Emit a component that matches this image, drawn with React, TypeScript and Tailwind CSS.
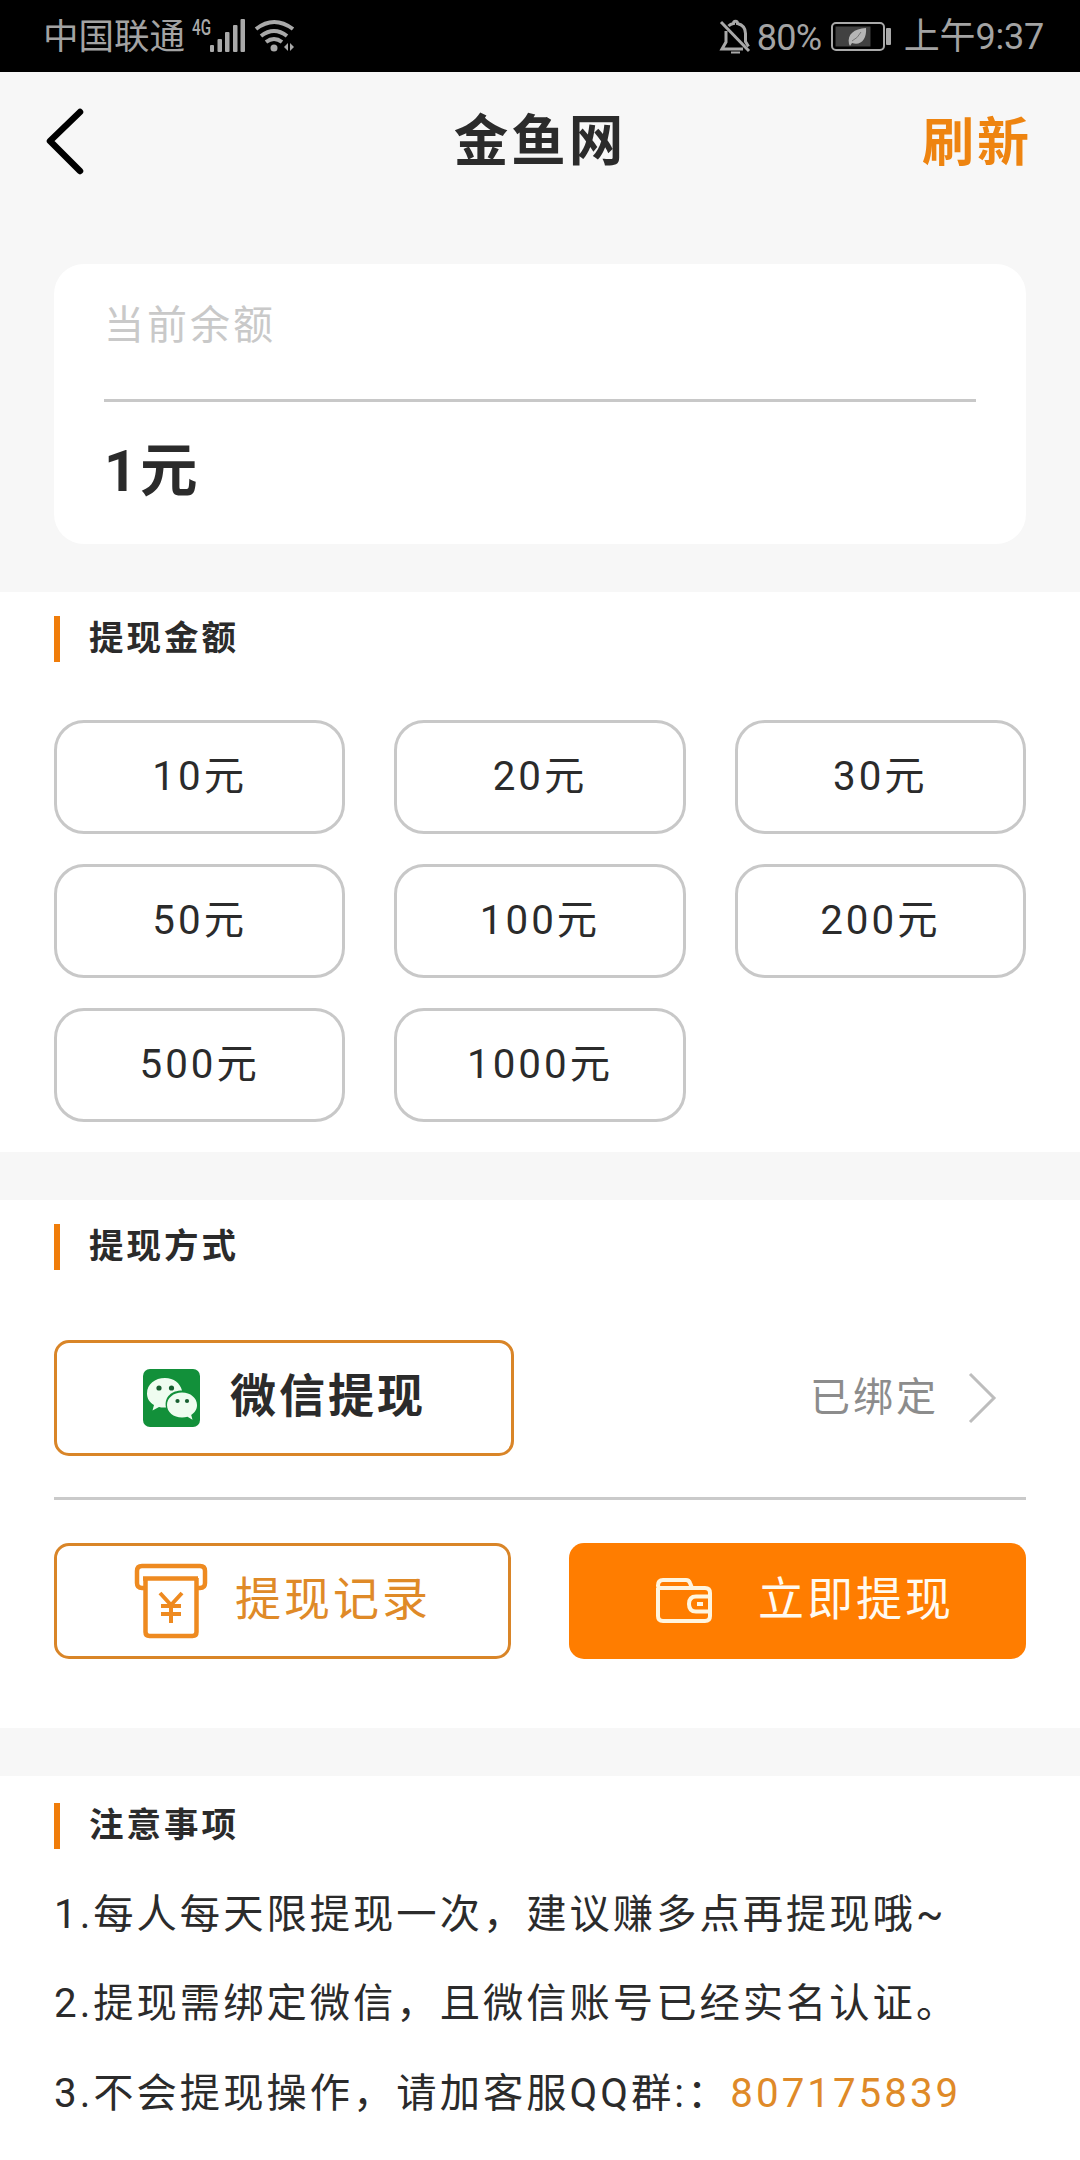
import React from "react";

const amounts = ["10元", "20元", "30元", "50元", "100元", "200元", "500元", "1000元"];

function StatusBar() {
  return (
    <div className="flex h-[72px] items-center bg-black text-[36px] leading-[72px] text-[#a3a3a3]">
      <span className="mt-[2px] ml-[43px] w-[144px] text-[35.5px]">中国联通</span>
      <svg className="ml-[4px]" width="106" height="72" viewBox="0 0 106 72" fill="none">
        <text x="1" y="35" fontSize="22" fontWeight="500" fontFamily="Roboto, sans-serif" fill="#a9a9a9" textLength="19" lengthAdjust="spacingAndGlyphs">4G</text>
        <g fill="#a9a9a9">
          <rect x="19" y="45" width="4" height="7" rx="1" />
          <rect x="26.500" y="39" width="4.500" height="13" rx="1" />
          <rect x="34" y="32" width="4.500" height="20" rx="1" />
          <rect x="42" y="25" width="4.500" height="27" rx="1" />
          <rect x="49.500" y="19" width="4.500" height="33" rx="1" />
          <circle cx="83" cy="48" r="3.500" />
          <path d="M97 43v8l-4-4zM99 43v8l4-4z" />
        </g>
        <g stroke="#a9a9a9" strokeWidth="4">
          <path d="M65 29q18-14 37 0" />
          <path d="M70 36q13-10 26 0" />
          <path d="M75 42q8-6 16 0" />
        </g>
      </svg>
      <svg className="ml-auto" width="34" height="72" viewBox="0 0 34 72" fill="none" stroke="#a9a9a9" strokeWidth="3">
        <path d="M3 22l28 29" />
        <path d="M8 31v11l-4 7h21M10.500 26q2-2 5-2.500c0-3 4-3 4 0q8 2 8 10v8l3 5" />
        <path d="M13 52.500h9" strokeWidth="2" />
      </svg>
      <span className="mt-[3px] ml-[5px] w-[73px] tracking-[-0.8px]">80%</span>
      <svg width="66" height="72" viewBox="0 0 66 72" fill="none">
        <rect x="2" y="23" width="52" height="27" rx="4" stroke="#a9a9a9" strokeWidth="2" />
        <rect x="5.500" y="26.500" width="35" height="20" fill="#414141" />
        <path d="M19 44c-2-10 5-15 17-16c1 11-5 18-14 15l-2 3z" fill="#b5b5b5" />
        <path d="M22 41q6-3 9-9" stroke="#777" strokeWidth="1" />
        <rect x="56" y="28" width="5" height="17" rx="1" fill="#a9a9a9" />
      </svg>
      <span className="mt-[2px] mr-[36px] ml-[8px] whitespace-nowrap tracking-[-0.2px]">上午9:37</span>
    </div>
  );
}

function SectionTitle({ children }: { children: React.ReactNode }) {
  return (
    <div className="flex h-[46px] items-center">
      <div className="h-[46px] w-[6px] bg-[#f07d0a]" />
      <h2 className="-mt-[3px] ml-[29px] text-[34.5px] leading-[46px] font-bold">{children}</h2>
    </div>
  );
}

function WechatIcon() {
  return (
    <svg className="shrink-0" width="58" height="58" viewBox="0 0 58 58">
      <rect width="57" height="58" rx="7" fill="#12903a" />
      <path d="M22 9C12 9 4 15 4 24.500c0 5 2.500 9 7 11.500l-1.500 5.500 6.500-3.500q3 .8 7 .5c-2-11 6-17 16-17C37 14 31 9 22 9z" fill="#effcf0" />
      <path d="M39 23.500c-8.500 0-15 5.500-15 12.500s6.500 12.500 15 12.500q3 0 5.500-.8l5 3-1.300-4.700c3.500-2.300 5.800-5.500 5.800-10 0-7-6.500-12.500-15-12.500z" fill="#effcf0" />
      <g fill="#175f30">
        <circle cx="16" cy="19" r="2.600" />
        <circle cx="28.500" cy="19" r="2.600" />
        <circle cx="34.500" cy="32" r="2.100" />
        <circle cx="44" cy="32" r="2.100" />
      </g>
    </svg>
  );
}

function RecordIcon() {
  return (
    <svg className="shrink-0" width="74" height="76" viewBox="0 0 74 76" fill="none" stroke="#ee8a20" strokeWidth="4.500" strokeLinejoin="round">
      <path d="M10 25H8q-5 0-5-5V8q0-5 5-5h58q5 0 5 5v12q0 5-5 5h-3" />
      <path d="M9 15.500h55" />
      <path d="M11.500 15v54q0 4 4 4h43q4 0 4-4V15" />
      <path d="M26 30l11 12 11-12M37 41v19M27 43h20M27 51h20" strokeWidth="4" />
    </svg>
  );
}

function WalletIcon() {
  return (
    <svg className="shrink-0" width="58" height="48" viewBox="0 0 58 48" fill="none" stroke="#fff5df" strokeWidth="4" strokeLinejoin="round">
      <path d="M3 11v28q0 5 5 5h42q5 0 5-5V16q0-5-5-5H6q-3 0-3-2.500Q3 3 8 3h23q3 0 4 3l2 5" />
      <path d="M55 19.500H41q-7 0-7 7.500t7 7.500h14" />
      <path d="M48 27h-6" strokeWidth="4" />
    </svg>
  );
}

export default function App() {
  return (
    <div className="flex h-[2160px] w-[1080px] flex-col overflow-hidden bg-[#f7f7f7] font-[Roboto,'Noto_Sans_CJK_SC',sans-serif] text-[#2b2b2b]">
      <StatusBar />

      <header className="grid h-[132px] grid-cols-3 items-center">
        <svg className="mt-[6px] ml-[44px]" width="44" height="72" viewBox="0 0 44 72" fill="none" stroke="#000" strokeWidth="6.500" strokeLinecap="round" strokeLinejoin="round">
          <path d="M36 7L6 36l30 30" />
        </svg>
        <h1 className="mt-[6px] text-center text-[54.500px] leading-[80px] font-bold tracking-[3px]">金鱼网</h1>
        <button className="mt-[11px] mr-[48px] text-right text-[52px] leading-[80px] font-bold tracking-[3px] text-[#ee8410]">刷新</button>
      </header>

      <section className="mx-[54px] mt-[60px] h-[280px] shrink-0 rounded-[30px] bg-white px-[50px] tracking-[3px]">
        <p className="pt-[32px] text-[40px] leading-[60px] text-[#c9c9c9]">当前余额</p>
        <div className="mt-[43px] h-[3px] bg-[#c8c8c8]" />
        <p className="mt-[30px] text-[57.500px] leading-[80px] font-bold">1元</p>
      </section>

      <section className="mt-[48px] h-[560px] shrink-0 bg-white px-[54px] pt-[24px] tracking-[3px]">
        <SectionTitle>提现金额</SectionTitle>
        <div className="mt-[58px] grid grid-cols-3 gap-x-[49px] gap-y-[30px]">
          {amounts.map((amount) => (
            <button key={amount} className="flex h-[114px] items-center justify-center rounded-[30px] border-[3px] border-[#c8c8c8] text-[40.3px]">
              {amount}
            </button>
          ))}
        </div>
      </section>

      <section className="mt-[48px] h-[528px] shrink-0 bg-white px-[54px] pt-[24px] tracking-[3px]">
        <SectionTitle>提现方式</SectionTitle>
        <div className="mt-[70px] flex items-center">
          <button className="flex h-[116px] w-[460px] items-center rounded-[15px] border-[3px] border-[#d98528] pl-[86px]">
            <WechatIcon />
            <span className="-mt-[5px] ml-[29px] text-[46px] leading-[60px] font-bold">微信提现</span>
          </button>
          <span className="mr-[28px] ml-auto text-[40px] leading-[60px] text-[#8c8c8c]">已绑定</span>
          <svg className="mr-[27px]" width="32" height="54" viewBox="0 0 32 54" fill="none" stroke="#bdbdbd" strokeWidth="3">
            <path d="M3 3l24 24L3 51" />
          </svg>
        </div>
        <div className="mt-[41px] h-[3px] bg-[#cacaca]" />
        <div className="mt-[43px] flex justify-between">
          <button className="flex h-[116px] w-[457px] items-center rounded-[15px] border-[3px] border-[#d98528] pl-[77px] text-[#df8a28]">
            <RecordIcon />
            <span className="-mt-[4px] ml-[27px] text-[46px] leading-[60px]">提现记录</span>
          </button>
          <button className="flex h-[116px] w-[457px] items-center rounded-[15px] bg-[#ff7d00] pl-[86px] text-[#fffaf0]">
            <WalletIcon />
            <span className="-mt-[4px] ml-[45px] text-[46px] leading-[60px]">立即提现</span>
          </button>
        </div>
      </section>

      <section className="mt-[48px] flex-1 bg-white px-[54px] pt-[27px] tracking-[3px]">
        <SectionTitle>注意事项</SectionTitle>
        <div className="mt-[21px] text-[40.3px] leading-[89.3px] whitespace-nowrap">
          <p>1.每人每天限提现一次，建议赚多点再提现哦~</p>
          <p>2.提现需绑定微信，且微信账号已经实名认证。</p>
          <p>
            3.不会提现操作，请加客服QQ群:：<span className="text-[#df8a28]">807175839</span>
          </p>
        </div>
      </section>
    </div>
  );
}
